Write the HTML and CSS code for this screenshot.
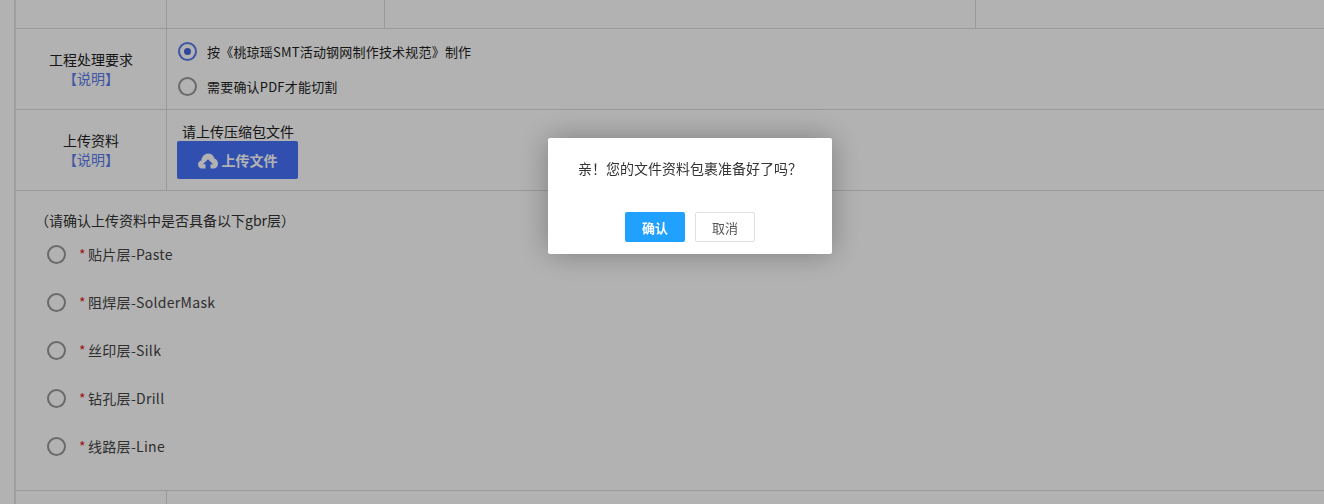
FILE: index.html
```html
<!DOCTYPE html>
<html lang="zh-CN">
<head>
    <meta charset="UTF-8">
    <meta name="viewport" content="width=device-width, initial-scale=1.0">
    <title>上传资料</title>
    <link rel="stylesheet" href="styles.css">
</head>
<body>
    <div class="form-table">
        <div class="row row-top">
            <div class="cell-label"></div>
            <div class="cell-a"></div>
            <div class="cell-b"></div>
            <div class="cell-c"></div>
        </div>
        <div class="row row-main">
            <div class="cell-label">
                <div>工程处理要求</div>
                <a class="explain">【说明】</a>
            </div>
            <div class="cell-value">
                <div class="option">
                    <span class="radio checked"></span>
                    <span>按《桃琼瑶SMT活动钢网制作技术规范》制作</span>
                </div>
                <div class="option">
                    <span class="radio"></span>
                    <span>需要确认PDF才能切割</span>
                </div>
            </div>
        </div>
        <div class="row row-main">
            <div class="cell-label">
                <div>上传资料</div>
                <a class="explain">【说明】</a>
            </div>
            <div class="cell-value upload-cell">
                <div class="upload-tip">请上传压缩包文件</div>
                <button class="upload-btn">
                    <svg class="cloud" viewBox="0 0 20 16" width="20" height="16">
                        <path fill-rule="evenodd" d="M4.6 15.6C2 15.6 0 13.8 0 11.4c0-2 1.4-3.6 3.3-4C3.8 3.6 6.7.6 10.2.6c3 0 5.500 2 6.300 4.900C18.600 6.200 20 8.300 20 10.700c0 2.800-2.100 4.900-4.800 4.900h-2.700v-4.300h2.600L10 6.200l-5.100 5.100h2.600v4.300z"/>
                    </svg>
                    <span>上传文件</span>
                </button>
            </div>
        </div>
        <div class="layers">
            <div class="layers-tip">（请确认上传资料中是否具备以下gbr层）</div>
            <div class="layer"><span class="radio"></span><span class="star">*</span><span>贴片层-Paste</span></div>
            <div class="layer"><span class="radio"></span><span class="star">*</span><span>阻焊层-SolderMask</span></div>
            <div class="layer"><span class="radio"></span><span class="star">*</span><span>丝印层-Silk</span></div>
            <div class="layer"><span class="radio"></span><span class="star">*</span><span>钻孔层-Drill</span></div>
            <div class="layer"><span class="radio"></span><span class="star">*</span><span>线路层-Line</span></div>
        </div>
        <div class="row row-bottom">
            <div class="cell-label"></div>
        </div>
    </div>

    <div class="overlay"></div>
    <div class="dialog">
        <div class="dialog-text">亲！您的文件资料包裹准备好了吗？</div>
        <div class="dialog-btns">
            <button class="btn-ok">确认</button>
            <button class="btn-cancel">取消</button>
        </div>
    </div>
</body>
</html>
```

FILE: styles.css
```css
* {
    box-sizing: border-box;
}
html, body {
    height: 100%;
}
body {
    margin: 0;
    background-color: #fff;
    font-family: "Noto Sans CJK SC", "Liberation Sans", sans-serif;
    font-size: 14px;
    color: #333;
    overflow: hidden;
}
.form-table {
    margin-left: 14px;
    min-height: 504px;
    border-left: 2px solid #e4e4e4;
}
.row {
    display: flex;
    border-bottom: 1px solid #dcdcdc;
}
.row-top {
    height: 29px;
}
.row-main {
    height: 81px;
}
.row-bottom {
    height: 14px;
    border-bottom: none;
}
.cell-label {
    width: 151px;
    flex-shrink: 0;
    border-right: 1px solid #dcdcdc;
    display: flex;
    flex-direction: column;
    justify-content: center;
    align-items: center;
    line-height: 19px;
    color: #222;
}
.cell-a {
    width: 218px;
    border-right: 1px solid #dcdcdc;
}
.cell-b {
    width: 591px;
    border-right: 1px solid #dcdcdc;
}
.cell-c {
    flex: 1;
}
.explain {
    color: #5a7cec;
}
.cell-value {
    flex: 1;
    display: flex;
    flex-direction: column;
    justify-content: center;
    padding-left: 11px;
}
.option {
    display: flex;
    align-items: center;
    height: 35px;
    font-size: 13px;
    letter-spacing: 0.2px;
    color: #222;
}
.radio {
    width: 19px;
    height: 19px;
    border: 2px solid #999;
    border-radius: 50%;
    flex-shrink: 0;
    display: flex;
    align-items: center;
    justify-content: center;
    background-color: #fff;
}
.option .radio {
    margin-right: 10px;
}
.radio.checked {
    border-color: #5a7cec;
}
.radio.checked::after {
    content: "";
    width: 7px;
    height: 7px;
    border-radius: 50%;
    background-color: #4468e0;
}
.upload-cell {
    padding-left: 10px;
}
.upload-tip {
    padding-left: 5px;
    line-height: 19px;
    color: #222;
}
.upload-btn {
    width: 121px;
    height: 38px;
    border: none;
    border-radius: 2px;
    background-color: #4572fb;
    color: #fff;
    font-family: inherit;
    font-size: 14px;
    font-weight: 700;
    display: flex;
    align-items: center;
    justify-content: center;
    gap: 4px;
    padding: 0;
}
.cloud {
    fill: #fff;
    margin-top: 3px;
}
.layers {
    height: 300px;
    border-bottom: 1px solid #dcdcdc;
    padding: 20px 0 20px 19px;
}
.layers-tip {
    line-height: 19px;
    color: #333;
}
.layer {
    display: flex;
    align-items: center;
    height: 48px;
    padding-left: 12px;
    letter-spacing: 0.3px;
    color: #444;
}
.layer .radio {
    margin-right: 13px;
}
.star {
    color: #e02020;
    width: 9px;
}
.overlay {
    position: fixed;
    inset: 0;
    background-color: rgba(0, 0, 0, 0.3);
}
.dialog {
    position: fixed;
    left: 548px;
    top: 138px;
    width: 284px;
    height: 116px;
    background-color: #fff;
    border-radius: 2px;
    box-shadow: 0 0 30px rgba(0, 0, 0, 0.3);
    padding-top: 20px;
    text-align: center;
}
.dialog-text {
    line-height: 20px;
    color: #333;
}
.dialog-btns {
    display: flex;
    justify-content: center;
    gap: 10px;
    margin-top: 34px;
    padding-left: 0;
}
.dialog-btns button {
    width: 60px;
    height: 30px;
    font-family: inherit;
    font-size: 13px;
    border-radius: 2px;
    padding: 0;
}
.btn-ok {
    border: none;
    background-color: #20a0ff;
    color: #fff;
    font-weight: 700;
}
.btn-cancel {
    border: 1px solid #dcdfe6;
    background-color: #fff;
    color: #555;
}
```
